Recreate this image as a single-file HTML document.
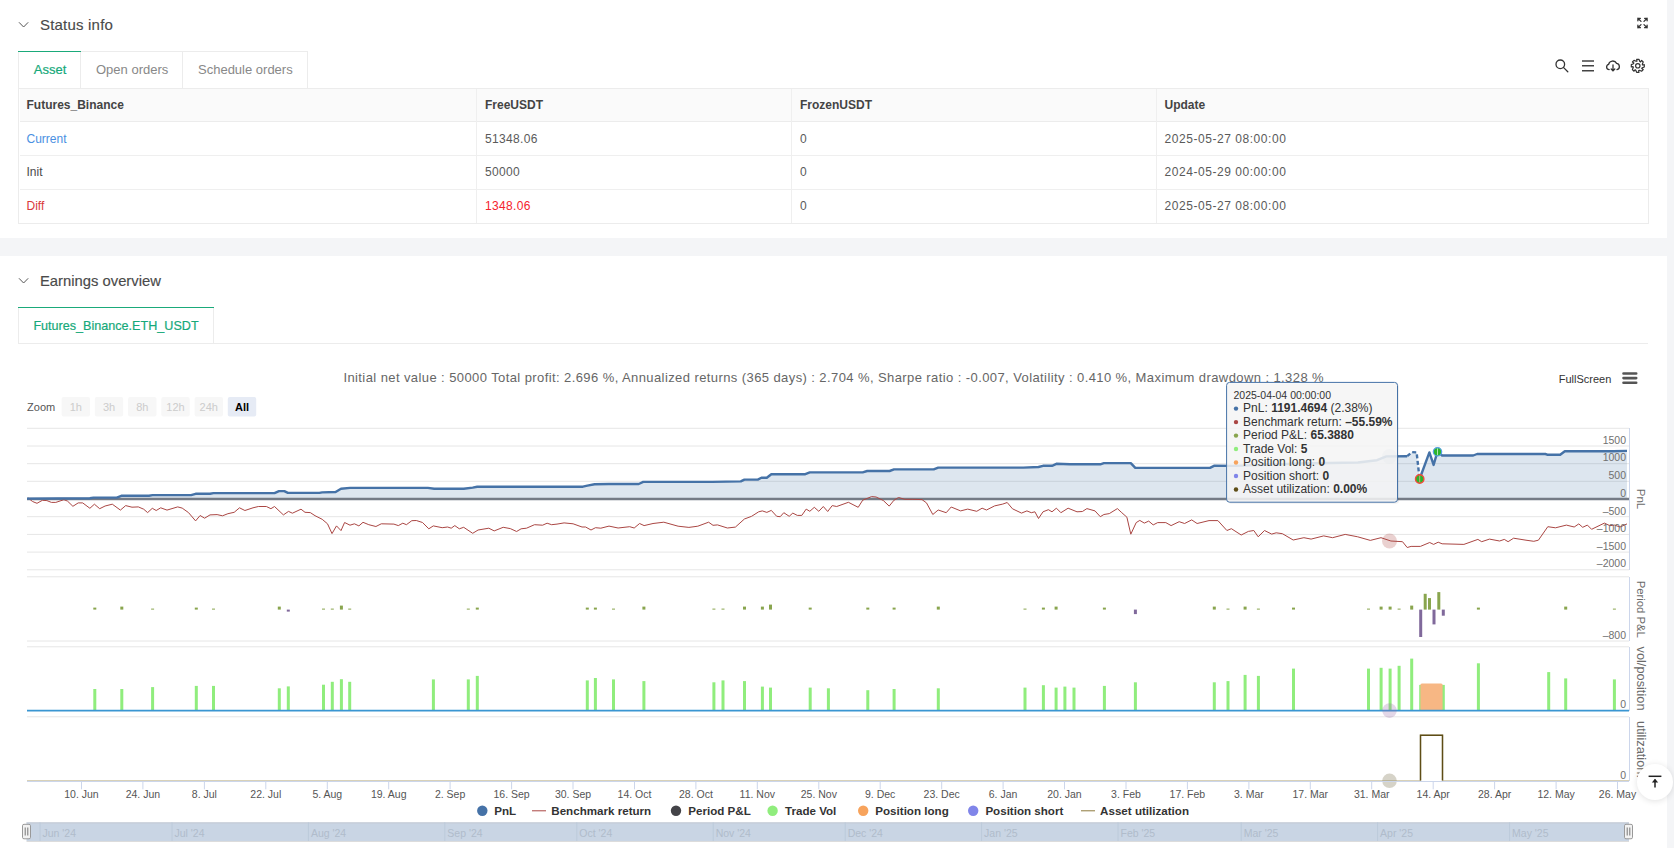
<!DOCTYPE html>
<html><head><meta charset="utf-8"><title>Status</title>
<style>
*{box-sizing:border-box;margin:0;padding:0}
html,body{width:1674px;height:848px;overflow:hidden;background:#f4f5f7;font-family:"Liberation Sans",sans-serif;}
.abs{position:absolute}
.card{position:absolute;left:0;width:1667px;background:#fff}
.t{position:absolute;white-space:nowrap;line-height:1}
</style></head><body>

<div class="card" style="top:0;height:238px"></div>
<div class="card" style="top:256px;height:600px"></div>
<svg class="abs" style="left:0;top:0" width="1674" height="848" viewBox="0 0 1674 848">
<path d="M19 22.3 L23.6 27 L28.2 22.3" fill="none" stroke="#555" stroke-width="1"/>
<path d="M19 278.3 L23.6 283 L28.2 278.3" fill="none" stroke="#555" stroke-width="1"/>
<g stroke="#333" stroke-width="1.3" fill="none" stroke-linecap="round" stroke-linejoin="round"><path d="M1641 21.4 L1637.9 18.3 M1637.9 20.8 V18.3 H1640.4"/><path d="M1644 21.4 L1647.1 18.3 M1647.1 20.8 V18.3 H1644.6"/><path d="M1641 24.6 L1637.9 27.7 M1637.9 25.2 V27.7 H1640.4"/><path d="M1644 24.6 L1647.1 27.7 M1647.1 25.2 V27.7 H1644.6"/></g>
<g stroke="#333" stroke-width="1.3" fill="none"><circle cx="1560.3" cy="64.3" r="4.3"/><path d="M1563.4 67.4 L1567.8 71.8" stroke-linecap="round"/></g>
<g stroke="#444" stroke-width="1.4"><path d="M1582 61 H1594 M1582 65.8 H1594 M1582 70.8 H1594"/></g>
<g stroke="#333" stroke-width="1.3" fill="none" stroke-linecap="round"><path d="M1609.2 69.6 C1606.2 69.6 1605.6 65.4 1608.6 64.4 C1609.4 60.4 1614.8 59.8 1616.6 63.4 C1619.8 63.6 1620.6 68.8 1617 69.6"/><path d="M1613 64.8 V70.6 M1611.2 69 L1613 70.8 L1614.8 69"/></g>
<path d="M1644.30 64.65 L1644.30 66.95 L1642.15 67.83 L1641.73 68.55 L1643.21 69.59 L1641.59 71.21 L1639.44 70.31 L1638.63 70.53 L1638.95 72.30 L1636.65 72.30 L1635.77 70.15 L1635.05 69.73 L1634.01 71.21 L1632.39 69.59 L1633.29 67.44 L1633.07 66.63 L1631.30 66.95 L1631.30 64.65 L1633.45 63.77 L1633.87 63.05 L1632.39 62.01 L1634.01 60.39 L1636.16 61.29 L1636.97 61.07 L1636.65 59.30 L1638.95 59.30 L1639.83 61.45 L1640.55 61.87 L1641.59 60.39 L1643.21 62.01 L1642.31 64.16 L1642.53 64.97 Z" fill="none" stroke="#333" stroke-width="1.2" stroke-linejoin="round"/>
<circle cx="1637.8" cy="65.8" r="2.2" fill="none" stroke="#333" stroke-width="1.2"/>
</svg>
<div class="t" style="left:40px;top:17.2px;font-size:15px;color:#4a4a4a;letter-spacing:0.2px;-webkit-text-stroke:0.15px #4a4a4a">Status info</div>
<div class="abs" style="left:18px;top:51px;width:290px;height:37px;border:1px solid #ececec;border-bottom:none"></div>
<div class="abs" style="left:18px;top:51px;width:63px;height:1.2px;background:#1aaa7a"></div>
<div class="abs" style="left:80px;top:52px;width:1px;height:36px;background:#ececec"></div>
<div class="abs" style="left:182px;top:52px;width:1px;height:36px;background:#ececec"></div>
<div class="t" style="left:33.8px;top:63px;font-size:13px;color:#16a97a;-webkit-text-stroke:0.2px #16a97a">Asset</div>
<div class="t" style="left:96px;top:63px;font-size:13px;color:#888">Open orders</div>
<div class="t" style="left:198px;top:63px;font-size:13px;color:#888">Schedule orders</div>
<div class="abs" style="left:18px;top:88px;width:1631px;height:135.5px;border:1px solid #ececec"></div>
<div class="abs" style="left:19.5px;top:89px;width:1628px;height:32.5px;background:#fafafa;border-bottom:1px solid #ececec"></div>
<div class="abs" style="left:19.5px;top:155px;width:1628px;height:1px;background:#efefef"></div>
<div class="abs" style="left:19.5px;top:189px;width:1628px;height:1px;background:#efefef"></div>
<div class="abs" style="left:476px;top:89px;width:1px;height:134px;background:#efefef"></div>
<div class="abs" style="left:791px;top:89px;width:1px;height:134px;background:#efefef"></div>
<div class="abs" style="left:1156px;top:89px;width:1px;height:134px;background:#efefef"></div>
<div class="t" style="left:26.5px;top:99px;font-size:12px;font-weight:bold;color:#444">Futures_Binance</div>
<div class="t" style="left:485px;top:99px;font-size:12px;font-weight:bold;color:#444">FreeUSDT</div>
<div class="t" style="left:800px;top:99px;font-size:12px;font-weight:bold;color:#444">FrozenUSDT</div>
<div class="t" style="left:1164.5px;top:99px;font-size:12px;font-weight:bold;color:#444">Update</div>
<div class="t" style="left:26.5px;top:133px;font-size:12px;color:#4a90e2;letter-spacing:0">Current</div>
<div class="t" style="left:485px;top:133px;font-size:12px;color:#5a5a5a;letter-spacing:0.35px">51348.06</div>
<div class="t" style="left:800px;top:133px;font-size:12px;color:#5a5a5a;letter-spacing:0.35px">0</div>
<div class="t" style="left:1164.5px;top:133px;font-size:12px;color:#5a5a5a;letter-spacing:0.55px">2025-05-27 08:00:00</div>
<div class="t" style="left:26.5px;top:165.9px;font-size:12px;color:#4a4a4a;letter-spacing:0">Init</div>
<div class="t" style="left:485px;top:165.9px;font-size:12px;color:#5a5a5a;letter-spacing:0.35px">50000</div>
<div class="t" style="left:800px;top:165.9px;font-size:12px;color:#5a5a5a;letter-spacing:0.35px">0</div>
<div class="t" style="left:1164.5px;top:165.9px;font-size:12px;color:#5a5a5a;letter-spacing:0.55px">2024-05-29 00:00:00</div>
<div class="t" style="left:26.5px;top:200px;font-size:12px;color:#d9383a;letter-spacing:0">Diff</div>
<div class="t" style="left:485px;top:200px;font-size:12px;color:#f5222d;letter-spacing:0.35px">1348.06</div>
<div class="t" style="left:800px;top:200px;font-size:12px;color:#5a5a5a;letter-spacing:0.35px">0</div>
<div class="t" style="left:1164.5px;top:200px;font-size:12px;color:#5a5a5a;letter-spacing:0.55px">2025-05-27 08:00:00</div>
<div class="t" style="left:40px;top:274px;font-size:14.8px;color:#4a4a4a;-webkit-text-stroke:0.15px #4a4a4a">Earnings overview</div>
<div class="abs" style="left:18px;top:307px;width:196px;height:37px;border:1px solid #ececec;border-bottom:none"></div>
<div class="abs" style="left:18px;top:307px;width:196px;height:1.2px;background:#1aaa7a"></div>
<div class="abs" style="left:18px;top:343px;width:1630px;height:1px;background:#ececec"></div>
<div class="t" style="left:33.4px;top:320px;font-size:12.6px;color:#16a97a;-webkit-text-stroke:0.2px #16a97a">Futures_Binance.ETH_USDT</div>
<svg class="abs" style="left:0;top:0" width="1674" height="848" viewBox="0 0 1674 848" font-family='"Liberation Sans", sans-serif'>
<text x="343.4" y="381.7" font-size="13" fill="#666" letter-spacing="0.41">Initial net value : 50000 Total profit: 2.696 %, Annualized returns (365 days) : 2.704 %, Sharpe ratio : -0.007, Volatility : 0.410 %, Maximum drawdown : 1.328 %</text>
<text x="1558.7" y="382.9" font-size="11" fill="#333">FullScreen</text>
<g stroke="#555" stroke-width="2.6" stroke-linecap="round"><path d="M1623.5 373.5 H1636.2 M1623.5 378.1 H1636.2 M1623.5 382.7 H1636.2"/></g>
<text x="27.1" y="411" font-size="11" fill="#555">Zoom</text>
<rect x="61.6" y="397" width="28.4" height="19.4" rx="2" fill="#f7f7f7"/>
<text x="75.8" y="411" font-size="11" fill="#cccccc" text-anchor="middle">1h</text>
<rect x="94.8" y="397" width="28.4" height="19.4" rx="2" fill="#f7f7f7"/>
<text x="109.0" y="411" font-size="11" fill="#cccccc" text-anchor="middle">3h</text>
<rect x="128.1" y="397" width="28.4" height="19.4" rx="2" fill="#f7f7f7"/>
<text x="142.3" y="411" font-size="11" fill="#cccccc" text-anchor="middle">8h</text>
<rect x="161.3" y="397" width="28.4" height="19.4" rx="2" fill="#f7f7f7"/>
<text x="175.5" y="411" font-size="11" fill="#cccccc" text-anchor="middle">12h</text>
<rect x="194.6" y="397" width="28.4" height="19.4" rx="2" fill="#f7f7f7"/>
<text x="208.8" y="411" font-size="11" fill="#cccccc" text-anchor="middle">24h</text>
<rect x="227.8" y="397" width="28.4" height="19.4" rx="2" fill="#e6ebf5"/>
<text x="242.0" y="411" font-size="11" fill="#000" text-anchor="middle" font-weight="bold">All</text>
<line x1="27" y1="428.3" x2="1629" y2="428.3" stroke="#e6e6e6" stroke-width="1"/>
<line x1="27" y1="446" x2="1629" y2="446" stroke="#e6e6e6" stroke-width="1"/>
<line x1="27" y1="463.7" x2="1629" y2="463.7" stroke="#e6e6e6" stroke-width="1"/>
<line x1="27" y1="481.3" x2="1629" y2="481.3" stroke="#e6e6e6" stroke-width="1"/>
<line x1="27" y1="516.7" x2="1629" y2="516.7" stroke="#e6e6e6" stroke-width="1"/>
<line x1="27" y1="534.4" x2="1629" y2="534.4" stroke="#e6e6e6" stroke-width="1"/>
<line x1="27" y1="552.1" x2="1629" y2="552.1" stroke="#e6e6e6" stroke-width="1"/>
<line x1="27" y1="569.8" x2="1629" y2="569.8" stroke="#e6e6e6" stroke-width="1"/>
<line x1="27" y1="576.8" x2="1629" y2="576.8" stroke="#e6e6e6" stroke-width="1"/>
<line x1="27" y1="641" x2="1629" y2="641" stroke="#e6e6e6" stroke-width="1"/>
<line x1="27" y1="646.8" x2="1629" y2="646.8" stroke="#e6e6e6" stroke-width="1"/>
<line x1="27" y1="716.8" x2="1629" y2="716.8" stroke="#e6e6e6" stroke-width="1"/>
<line x1="1629.5" y1="428" x2="1629.5" y2="570" stroke="#ccd6eb" stroke-width="1"/>
<line x1="1629.5" y1="577" x2="1629.5" y2="641" stroke="#ccd6eb" stroke-width="1"/>
<line x1="1629.5" y1="647" x2="1629.5" y2="711" stroke="#ccd6eb" stroke-width="1"/>
<line x1="1629.5" y1="717" x2="1629.5" y2="781" stroke="#ccd6eb" stroke-width="1"/>
<path d="M27,499 L27.0,498.6 L89.9,498.3 L93.5,497.6 L116.8,497.6 L121.3,495.8 L149.0,495.8 L152.6,495.1 L191.1,495.1 L195.6,493.8 L210.0,493.8 L213.5,493.1 L274.5,493.1 L279.0,491.1 L284.3,491.1 L287.9,492.9 L319.3,492.9 L322.2,492.4 L335.6,492.0 L341.0,488.8 L350.0,487.9 L427.9,487.9 L434.2,488.8 L463.7,488.8 L472.7,487.6 L477.2,486.7 L582.9,486.7 L587.4,485.6 L594.6,484.3 L608.9,484.0 L638.7,484.0 L643.2,481.9 L712.2,481.9 L740.8,481.4 L744.4,479.6 L757.8,479.6 L761.4,477.8 L766.8,477.8 L771.3,474.2 L805.3,474.2 L809.8,472.4 L862.7,472.4 L867.2,471.0 L889.6,471.0 L894.0,469.4 L933.7,469.4 L938.2,467.6 L1023.3,467.6 L1038.5,467.0 L1043.0,465.8 L1052.0,465.8 L1056.4,463.8 L1069.9,464.3 L1100.3,464.3 L1103.9,463.1 L1130.8,463.1 L1135.3,467.9 L1210.0,467.9 L1214.5,465.7 L1235.5,465.9 L1300.0,463.5 L1358.0,462.5 L1377.0,460.2 L1386.4,456.4 L1407.2,456.2 L1412.0,452.1 L1416.6,452.4 L1419.6,479.0 L1429.4,452.4 L1433.6,464.9 L1437.5,451.6 L1442.1,455.5 L1473.2,455.5 L1477.1,454.0 L1545.4,454.0 L1547.8,454.8 L1560.2,454.8 L1564.8,451.2 L1613.0,451.2 L1627.0,450.9 L1627,499 Z" fill="#4572A7" fill-opacity="0.18"/>
<line x1="27" y1="499" x2="1629" y2="499" stroke="#747b86" stroke-width="2.4"/>
<polyline points="28.1,497.9 32.5,501.5 37.0,503.3 42.4,500.3 46.9,500.6 51.4,502.4 55.8,502.4 63.9,499.7 67.5,501.1 72.9,506.3 78.2,502.9 82.7,502.9 89.9,508.3 94.4,504.2 99.7,508.7 105.1,506.0 112.3,504.2 120.4,510.1 125.7,505.6 132.0,507.2 138.3,506.9 143.7,509.2 147.6,512.6 152.3,508.3 156.2,510.5 160.7,507.8 167.0,510.1 177.7,506.9 182.2,508.1 188.5,512.6 195.6,520.9 200.1,515.5 204.6,518.2 210.0,514.9 217.1,514.6 222.5,515.8 227.9,513.7 234.2,512.3 239.5,507.8 244.9,510.5 253.0,507.8 258.4,506.5 266.4,506.5 270.9,508.7 274.5,506.5 283.4,514.9 288.5,511.4 292.4,513.2 301.0,509.2 305.0,512.3 310.3,512.6 315.0,515.7 322.2,519.3 327.5,523.8 332.0,533.6 336.5,525.9 341.0,530.6 344.6,522.5 350.0,525.2 354.4,523.8 358.9,525.9 363.0,522.3 368.8,524.7 375.9,526.5 381.3,523.8 393.9,524.1 398.3,525.6 402.8,523.2 406.4,524.7 411.8,520.7 416.3,520.5 422.5,522.5 428.8,528.8 433.3,525.9 442.2,527.7 447.6,527.0 451.2,528.2 454.8,525.6 459.3,528.8 463.7,527.3 472.7,533.3 478.1,530.0 488.8,528.2 494.2,530.9 503.2,527.3 510.3,528.6 516.6,531.5 521.1,528.8 526.5,528.2 534.5,524.7 542.6,525.2 547.1,523.2 551.6,524.7 557.0,524.1 564.1,522.9 573.1,523.8 582.0,527.0 585.6,527.0 591.0,530.0 595.5,527.7 600.8,528.2 609.0,526.1 618.1,528.0 629.7,526.7 634.2,528.0 639.6,523.5 644.1,525.6 653.0,523.5 663.8,522.2 678.1,526.2 688.9,527.4 697.8,526.2 708.6,522.2 713.0,525.3 717.5,524.9 727.4,528.0 735.4,527.1 744.4,519.0 751.6,516.3 758.7,511.8 762.3,510.9 766.8,512.4 771.3,510.4 776.7,516.3 780.2,516.7 783.8,512.7 789.2,516.3 792.8,513.1 797.3,515.4 801.8,515.4 806.2,509.1 809.8,511.3 814.3,507.3 818.8,511.3 823.3,506.5 827.7,511.5 832.2,505.6 836.7,506.5 848.4,502.3 858.2,507.3 862.7,500.2 871.6,496.6 876.1,497.0 883.3,500.5 889.2,506.1 894.0,500.2 898.5,497.5 904.8,499.3 912.2,499.3 922.0,499.6 926.5,502.9 932.8,514.5 938.2,510.0 946.2,512.7 951.2,507.0 960.6,510.9 967.7,509.1 976.7,511.3 982.1,508.2 986.5,510.0 994.6,505.9 1002.7,504.1 1007.2,502.5 1012.5,508.8 1021.5,513.1 1026.9,510.9 1031.3,512.7 1034.9,511.8 1038.5,518.5 1043.0,511.8 1048.4,509.7 1052.0,511.8 1056.4,508.2 1060.9,512.7 1068.1,508.2 1077.0,511.8 1082.4,511.5 1086.9,508.6 1095.0,510.9 1100.3,516.7 1103.9,514.5 1109.3,513.6 1117.4,508.6 1121.8,512.7 1126.9,517.2 1130.8,534.2 1136.2,522.6 1139.8,520.4 1144.3,523.1 1148.7,521.1 1153.2,524.9 1157.7,522.6 1165.8,522.6 1171.1,525.6 1179.2,521.7 1184.6,523.5 1191.7,519.9 1197.1,523.5 1209.0,520.6 1217.9,520.6 1226.9,530.5 1231.4,528.7 1241.2,535.0 1248.4,531.4 1253.8,530.5 1258.2,536.8 1264.5,530.5 1271.7,534.1 1276.2,532.8 1282.4,533.7 1293.2,540.0 1303.9,537.7 1311.1,539.1 1323.7,535.9 1332.6,537.7 1345.2,534.4 1357.7,536.8 1370.3,540.4 1381.0,537.7 1390.9,541.0 1402.5,541.7 1407.2,547.5 1411.1,546.4 1420.4,546.4 1429.7,542.5 1433.6,544.4 1438.2,542.2 1442.1,543.8 1463.9,544.4 1477.9,539.4 1481.7,541.7 1489.5,539.1 1499.6,541.0 1504.3,539.4 1508.1,541.7 1513.6,538.2 1526.0,540.2 1533.8,541.3 1538.4,540.2 1547.8,526.7 1555.5,527.8 1566.4,525.1 1574.2,527.0 1578.8,523.9 1582.7,527.3 1587.4,525.1 1591.6,529.3 1604.4,523.1 1609.9,525.7 1614.5,525.1 1620.0,527.0 1627.0,523.9" fill="none" stroke="#AA4643" stroke-width="1" stroke-linejoin="round"/>
<polyline points="27.0,498.6 89.9,498.3 93.5,497.6 116.8,497.6 121.3,495.8 149.0,495.8 152.6,495.1 191.1,495.1 195.6,493.8 210.0,493.8 213.5,493.1 274.5,493.1 279.0,491.1 284.3,491.1 287.9,492.9 319.3,492.9 322.2,492.4 335.6,492.0 341.0,488.8 350.0,487.9 427.9,487.9 434.2,488.8 463.7,488.8 472.7,487.6 477.2,486.7 582.9,486.7 587.4,485.6 594.6,484.3 608.9,484.0 638.7,484.0 643.2,481.9 712.2,481.9 740.8,481.4 744.4,479.6 757.8,479.6 761.4,477.8 766.8,477.8 771.3,474.2 805.3,474.2 809.8,472.4 862.7,472.4 867.2,471.0 889.6,471.0 894.0,469.4 933.7,469.4 938.2,467.6 1023.3,467.6 1038.5,467.0 1043.0,465.8 1052.0,465.8 1056.4,463.8 1069.9,464.3 1100.3,464.3 1103.9,463.1 1130.8,463.1 1135.3,467.9 1210.0,467.9 1214.5,465.7 1235.5,465.9 1300.0,463.5 1358.0,462.5 1377.0,460.2 1386.4,456.4 1407.2,456.2" fill="none" stroke="#4572A7" stroke-width="2.4" stroke-linejoin="round"/>
<polyline points="1407.2,456.2 1412.0,452.1 1416.6,452.4 1419.6,479.0" fill="none" stroke="#4572A7" stroke-width="2.4" stroke-dasharray="4,2.5"/>
<polyline points="1419.6,479.0 1429.4,452.4 1433.6,464.9 1437.5,451.6 1442.1,455.5 1473.2,455.5 1477.1,454.0 1545.4,454.0 1547.8,454.8 1560.2,454.8 1564.8,451.2 1613.0,451.2 1627.0,450.9" fill="none" stroke="#4572A7" stroke-width="2.4" stroke-linejoin="round"/>
<circle cx="1419.7" cy="479" r="4.2" fill="#2bb52b" stroke="#f24a3a" stroke-width="1.4"/>
<line x1="1419.7" y1="475.6" x2="1419.7" y2="482.4" stroke="#f0a090" stroke-width="0.8"/>
<circle cx="1437.5" cy="451.8" r="4.2" fill="#2bb52b" stroke="#57a0e6" stroke-width="1.2"/>
<line x1="1437.5" y1="448.4" x2="1437.5" y2="455.2" stroke="#d0f0d0" stroke-width="0.8"/>
<circle cx="1389.5" cy="541" r="7.5" fill="#AA4643" fill-opacity="0.25"/>
<circle cx="1389.5" cy="456.5" r="7.5" fill="#4572A7" fill-opacity="0.2"/>
<text x="1626" y="443.6" font-size="10.5" fill="#707070" text-anchor="end">1500</text>
<text x="1626" y="461.3" font-size="10.5" fill="#707070" text-anchor="end">1000</text>
<text x="1626" y="479" font-size="10.5" fill="#707070" text-anchor="end">500</text>
<text x="1626" y="497.2" font-size="10.5" fill="#707070" text-anchor="end">0</text>
<text x="1626" y="514.5" font-size="10.5" fill="#707070" text-anchor="end">&#8211;500</text>
<text x="1626" y="532.3" font-size="10.5" fill="#707070" text-anchor="end">&#8211;1000</text>
<text x="1626" y="549.6" font-size="10.5" fill="#707070" text-anchor="end">&#8211;1500</text>
<text x="1626" y="567.3" font-size="10.5" fill="#707070" text-anchor="end">&#8211;2000</text>
<text x="1626" y="638.6" font-size="10.5" fill="#707070" text-anchor="end">&#8211;800</text>
<text x="1626" y="708" font-size="10.5" fill="#707070" text-anchor="end">0</text>
<text x="1626" y="778.6" font-size="10.5" fill="#707070" text-anchor="end">0</text>
<text x="0" y="0" font-size="11.5" fill="#6a6a6a" text-anchor="middle" transform="translate(1636.5 499) rotate(90)">PnL</text>
<text x="0" y="0" font-size="11.3" fill="#6a6a6a" text-anchor="middle" transform="translate(1636.5 609.3) rotate(90)">Period P&amp;L</text>
<text x="0" y="0" font-size="12.8" fill="#6a6a6a" text-anchor="middle" transform="translate(1636.5 678.5) rotate(90)">vol/position</text>
<text x="0" y="0" font-size="12.8" fill="#6a6a6a" text-anchor="middle" transform="translate(1636.5 749.5) rotate(90)">utilization.</text>
<rect x="93.3" y="607.6" width="3" height="2" fill="#89A54E"/>
<rect x="120.3" y="606.6" width="3" height="3" fill="#89A54E"/>
<rect x="151.1" y="608.6" width="3" height="1" fill="#89A54E"/>
<rect x="194.8" y="607.6" width="3" height="2" fill="#89A54E"/>
<rect x="212.0" y="608.6" width="3" height="1" fill="#89A54E"/>
<rect x="277.8" y="606.6" width="3" height="3" fill="#89A54E"/>
<rect x="286.8" y="609.6" width="3" height="2" fill="#80699B"/>
<rect x="322.0" y="608.6" width="3" height="1" fill="#89A54E"/>
<rect x="330.8" y="608.6" width="3" height="1" fill="#89A54E"/>
<rect x="339.9" y="605.6" width="3" height="4" fill="#89A54E"/>
<rect x="348.2" y="608.6" width="3" height="1" fill="#89A54E"/>
<rect x="466.8" y="608.6" width="3" height="1" fill="#89A54E"/>
<rect x="475.8" y="607.6" width="3" height="2" fill="#89A54E"/>
<rect x="585.8" y="607.6" width="3" height="2" fill="#89A54E"/>
<rect x="593.9" y="607.6" width="3" height="2" fill="#89A54E"/>
<rect x="612.0" y="608.6" width="3" height="1" fill="#89A54E"/>
<rect x="642.4" y="606.6" width="3" height="3" fill="#89A54E"/>
<rect x="712.4" y="608.6" width="3" height="1" fill="#89A54E"/>
<rect x="721.5" y="608.6" width="3" height="1" fill="#89A54E"/>
<rect x="743.0" y="606.6" width="3" height="3" fill="#89A54E"/>
<rect x="760.9" y="606.6" width="3" height="3" fill="#89A54E"/>
<rect x="769.0" y="604.6" width="3" height="5" fill="#89A54E"/>
<rect x="808.7" y="607.6" width="3" height="2" fill="#89A54E"/>
<rect x="866.3" y="607.6" width="3" height="2" fill="#89A54E"/>
<rect x="892.6" y="607.6" width="3" height="2" fill="#89A54E"/>
<rect x="936.8" y="606.6" width="3" height="3" fill="#89A54E"/>
<rect x="1023.5" y="608.6" width="3" height="1" fill="#89A54E"/>
<rect x="1041.9" y="607.6" width="3" height="2" fill="#89A54E"/>
<rect x="1054.6" y="606.6" width="3" height="3" fill="#89A54E"/>
<rect x="1102.9" y="607.6" width="3" height="2" fill="#89A54E"/>
<rect x="1133.9" y="609.6" width="3" height="4.5" fill="#80699B"/>
<rect x="1212.8" y="606.6" width="3" height="3" fill="#89A54E"/>
<rect x="1226.5" y="608.6" width="3" height="1" fill="#89A54E"/>
<rect x="1243.6" y="606.6" width="3" height="3" fill="#89A54E"/>
<rect x="1256.9" y="608.6" width="3" height="1" fill="#89A54E"/>
<rect x="1292.0" y="607.6" width="3" height="2" fill="#89A54E"/>
<rect x="1367.0" y="608.6" width="3" height="1" fill="#89A54E"/>
<rect x="1379.6" y="606.6" width="3" height="3" fill="#89A54E"/>
<rect x="1388.6" y="606.6" width="3" height="3" fill="#89A54E"/>
<rect x="1397.6" y="608.6" width="3" height="1" fill="#89A54E"/>
<rect x="1410.2" y="605.6" width="3" height="4" fill="#89A54E"/>
<rect x="1419.2" y="609.6" width="3" height="27.4" fill="#80699B"/>
<rect x="1423.7" y="593.8" width="3" height="15.8" fill="#89A54E"/>
<rect x="1428.0" y="598.1" width="3" height="11.5" fill="#89A54E"/>
<rect x="1432.5" y="609.6" width="3" height="14.8" fill="#80699B"/>
<rect x="1437.3" y="592.1" width="3" height="17.5" fill="#89A54E"/>
<rect x="1441.8" y="609.6" width="3" height="6.1" fill="#80699B"/>
<rect x="1476.9" y="607.6" width="3" height="2" fill="#89A54E"/>
<rect x="1564.2" y="606.6" width="3" height="3" fill="#89A54E"/>
<rect x="1612.9" y="608.6" width="3" height="1" fill="#89A54E"/>
<rect x="93.3" y="689.0" width="3" height="21.6" fill="#90ed7d"/>
<rect x="120.3" y="689.0" width="3" height="21.6" fill="#90ed7d"/>
<rect x="151.1" y="687.1" width="3" height="23.5" fill="#90ed7d"/>
<rect x="194.8" y="685.9" width="3" height="24.7" fill="#90ed7d"/>
<rect x="212.0" y="685.9" width="3" height="24.7" fill="#90ed7d"/>
<rect x="277.8" y="688.3" width="3" height="22.3" fill="#90ed7d"/>
<rect x="286.8" y="686.4" width="3" height="24.2" fill="#90ed7d"/>
<rect x="322.0" y="684.7" width="3" height="25.9" fill="#90ed7d"/>
<rect x="330.8" y="681.8" width="3" height="28.8" fill="#90ed7d"/>
<rect x="339.9" y="679.2" width="3" height="31.4" fill="#90ed7d"/>
<rect x="348.2" y="681.8" width="3" height="28.8" fill="#90ed7d"/>
<rect x="431.9" y="679.4" width="3" height="31.2" fill="#90ed7d"/>
<rect x="466.8" y="679.4" width="3" height="31.2" fill="#90ed7d"/>
<rect x="475.8" y="675.9" width="3" height="34.7" fill="#90ed7d"/>
<rect x="585.8" y="680.4" width="3" height="30.2" fill="#90ed7d"/>
<rect x="593.9" y="678.0" width="3" height="32.6" fill="#90ed7d"/>
<rect x="612.0" y="679.4" width="3" height="31.2" fill="#90ed7d"/>
<rect x="642.4" y="681.1" width="3" height="29.5" fill="#90ed7d"/>
<rect x="712.4" y="682.3" width="3" height="28.3" fill="#90ed7d"/>
<rect x="721.5" y="680.4" width="3" height="30.2" fill="#90ed7d"/>
<rect x="743.0" y="681.1" width="3" height="29.5" fill="#90ed7d"/>
<rect x="760.9" y="686.6" width="3" height="24.0" fill="#90ed7d"/>
<rect x="769.0" y="687.6" width="3" height="23.0" fill="#90ed7d"/>
<rect x="808.7" y="687.6" width="3" height="23.0" fill="#90ed7d"/>
<rect x="826.9" y="688.3" width="3" height="22.3" fill="#90ed7d"/>
<rect x="866.3" y="690.2" width="3" height="20.4" fill="#90ed7d"/>
<rect x="892.6" y="689.0" width="3" height="21.6" fill="#90ed7d"/>
<rect x="936.8" y="688.3" width="3" height="22.3" fill="#90ed7d"/>
<rect x="1023.5" y="687.6" width="3" height="23.0" fill="#90ed7d"/>
<rect x="1041.9" y="685.2" width="3" height="25.4" fill="#90ed7d"/>
<rect x="1054.6" y="687.6" width="3" height="23.0" fill="#90ed7d"/>
<rect x="1063.4" y="686.6" width="3" height="24.0" fill="#90ed7d"/>
<rect x="1072.5" y="687.6" width="3" height="23.0" fill="#90ed7d"/>
<rect x="1102.9" y="685.9" width="3" height="24.7" fill="#90ed7d"/>
<rect x="1133.9" y="682.3" width="3" height="28.3" fill="#90ed7d"/>
<rect x="1212.8" y="682.3" width="3" height="28.3" fill="#90ed7d"/>
<rect x="1226.5" y="681.1" width="3" height="29.5" fill="#90ed7d"/>
<rect x="1243.6" y="674.9" width="3" height="35.7" fill="#90ed7d"/>
<rect x="1256.9" y="675.9" width="3" height="34.7" fill="#90ed7d"/>
<rect x="1292.0" y="668.6" width="3" height="42.0" fill="#90ed7d"/>
<rect x="1367.0" y="668.6" width="3" height="42.0" fill="#90ed7d"/>
<rect x="1379.6" y="667.8" width="3" height="42.8" fill="#90ed7d"/>
<rect x="1388.6" y="668.6" width="3" height="42.0" fill="#90ed7d"/>
<rect x="1397.6" y="665.8" width="3" height="44.8" fill="#90ed7d"/>
<rect x="1410.2" y="658.6" width="3" height="52.0" fill="#90ed7d"/>
<rect x="1419.2" y="684.9" width="3" height="25.7" fill="#90ed7d"/>
<rect x="1441.8" y="684.9" width="3" height="25.7" fill="#90ed7d"/>
<rect x="1476.9" y="663.3" width="3" height="47.3" fill="#90ed7d"/>
<rect x="1547.2" y="672.1" width="3" height="38.5" fill="#90ed7d"/>
<rect x="1564.2" y="678.4" width="3" height="32.2" fill="#90ed7d"/>
<rect x="1612.9" y="679.4" width="3" height="31.2" fill="#90ed7d"/>
<rect x="1420.4" y="683.4" width="22.2" height="27.2" rx="1.5" fill="#f7b784"/>
<line x1="27" y1="710.6" x2="1629" y2="710.6" stroke="#3a96d2" stroke-width="1.6"/>
<circle cx="1389.5" cy="710.6" r="7.3" fill="#9a6fa8" fill-opacity="0.28"/>
<path d="M27 780.6 H1420.5 V735.2 H1442.5 V780.6 H1629" fill="none" stroke="#d8d1b8" stroke-width="1.2"/>
<path d="M1420.5 780.6 V735.2 H1442.5 V780.6" fill="none" stroke="#5e4d16" stroke-width="1.5"/>
<circle cx="1389.5" cy="780.8" r="7.3" fill="#8a8160" fill-opacity="0.35"/>
<line x1="27" y1="781.5" x2="1629" y2="781.5" stroke="#ccd6eb" stroke-width="1"/>
<line x1="81.5" y1="781.5" x2="81.5" y2="789.3" stroke="#ccd6eb" stroke-width="1"/>
<text x="81.5" y="798" font-size="10.5" fill="#555" text-anchor="middle">10. Jun</text>
<line x1="142.9" y1="781.5" x2="142.9" y2="789.3" stroke="#ccd6eb" stroke-width="1"/>
<text x="142.9" y="798" font-size="10.5" fill="#555" text-anchor="middle">24. Jun</text>
<line x1="204.4" y1="781.5" x2="204.4" y2="789.3" stroke="#ccd6eb" stroke-width="1"/>
<text x="204.4" y="798" font-size="10.5" fill="#555" text-anchor="middle">8. Jul</text>
<line x1="265.8" y1="781.5" x2="265.8" y2="789.3" stroke="#ccd6eb" stroke-width="1"/>
<text x="265.8" y="798" font-size="10.5" fill="#555" text-anchor="middle">22. Jul</text>
<line x1="327.3" y1="781.5" x2="327.3" y2="789.3" stroke="#ccd6eb" stroke-width="1"/>
<text x="327.3" y="798" font-size="10.5" fill="#555" text-anchor="middle">5. Aug</text>
<line x1="388.7" y1="781.5" x2="388.7" y2="789.3" stroke="#ccd6eb" stroke-width="1"/>
<text x="388.7" y="798" font-size="10.5" fill="#555" text-anchor="middle">19. Aug</text>
<line x1="450.1" y1="781.5" x2="450.1" y2="789.3" stroke="#ccd6eb" stroke-width="1"/>
<text x="450.1" y="798" font-size="10.5" fill="#555" text-anchor="middle">2. Sep</text>
<line x1="511.6" y1="781.5" x2="511.6" y2="789.3" stroke="#ccd6eb" stroke-width="1"/>
<text x="511.6" y="798" font-size="10.5" fill="#555" text-anchor="middle">16. Sep</text>
<line x1="573.0" y1="781.5" x2="573.0" y2="789.3" stroke="#ccd6eb" stroke-width="1"/>
<text x="573.0" y="798" font-size="10.5" fill="#555" text-anchor="middle">30. Sep</text>
<line x1="634.5" y1="781.5" x2="634.5" y2="789.3" stroke="#ccd6eb" stroke-width="1"/>
<text x="634.5" y="798" font-size="10.5" fill="#555" text-anchor="middle">14. Oct</text>
<line x1="695.9" y1="781.5" x2="695.9" y2="789.3" stroke="#ccd6eb" stroke-width="1"/>
<text x="695.9" y="798" font-size="10.5" fill="#555" text-anchor="middle">28. Oct</text>
<line x1="757.3" y1="781.5" x2="757.3" y2="789.3" stroke="#ccd6eb" stroke-width="1"/>
<text x="757.3" y="798" font-size="10.5" fill="#555" text-anchor="middle">11. Nov</text>
<line x1="818.8" y1="781.5" x2="818.8" y2="789.3" stroke="#ccd6eb" stroke-width="1"/>
<text x="818.8" y="798" font-size="10.5" fill="#555" text-anchor="middle">25. Nov</text>
<line x1="880.2" y1="781.5" x2="880.2" y2="789.3" stroke="#ccd6eb" stroke-width="1"/>
<text x="880.2" y="798" font-size="10.5" fill="#555" text-anchor="middle">9. Dec</text>
<line x1="941.7" y1="781.5" x2="941.7" y2="789.3" stroke="#ccd6eb" stroke-width="1"/>
<text x="941.7" y="798" font-size="10.5" fill="#555" text-anchor="middle">23. Dec</text>
<line x1="1003.1" y1="781.5" x2="1003.1" y2="789.3" stroke="#ccd6eb" stroke-width="1"/>
<text x="1003.1" y="798" font-size="10.5" fill="#555" text-anchor="middle">6. Jan</text>
<line x1="1064.5" y1="781.5" x2="1064.5" y2="789.3" stroke="#ccd6eb" stroke-width="1"/>
<text x="1064.5" y="798" font-size="10.5" fill="#555" text-anchor="middle">20. Jan</text>
<line x1="1126.0" y1="781.5" x2="1126.0" y2="789.3" stroke="#ccd6eb" stroke-width="1"/>
<text x="1126.0" y="798" font-size="10.5" fill="#555" text-anchor="middle">3. Feb</text>
<line x1="1187.4" y1="781.5" x2="1187.4" y2="789.3" stroke="#ccd6eb" stroke-width="1"/>
<text x="1187.4" y="798" font-size="10.5" fill="#555" text-anchor="middle">17. Feb</text>
<line x1="1248.9" y1="781.5" x2="1248.9" y2="789.3" stroke="#ccd6eb" stroke-width="1"/>
<text x="1248.9" y="798" font-size="10.5" fill="#555" text-anchor="middle">3. Mar</text>
<line x1="1310.3" y1="781.5" x2="1310.3" y2="789.3" stroke="#ccd6eb" stroke-width="1"/>
<text x="1310.3" y="798" font-size="10.5" fill="#555" text-anchor="middle">17. Mar</text>
<line x1="1371.7" y1="781.5" x2="1371.7" y2="789.3" stroke="#ccd6eb" stroke-width="1"/>
<text x="1371.7" y="798" font-size="10.5" fill="#555" text-anchor="middle">31. Mar</text>
<line x1="1433.2" y1="781.5" x2="1433.2" y2="789.3" stroke="#ccd6eb" stroke-width="1"/>
<text x="1433.2" y="798" font-size="10.5" fill="#555" text-anchor="middle">14. Apr</text>
<line x1="1494.6" y1="781.5" x2="1494.6" y2="789.3" stroke="#ccd6eb" stroke-width="1"/>
<text x="1494.6" y="798" font-size="10.5" fill="#555" text-anchor="middle">28. Apr</text>
<line x1="1556.1" y1="781.5" x2="1556.1" y2="789.3" stroke="#ccd6eb" stroke-width="1"/>
<text x="1556.1" y="798" font-size="10.5" fill="#555" text-anchor="middle">12. May</text>
<line x1="1617.5" y1="781.5" x2="1617.5" y2="789.3" stroke="#ccd6eb" stroke-width="1"/>
<text x="1617.5" y="798" font-size="10.5" fill="#555" text-anchor="middle">26. May</text>
<circle cx="482.3" cy="810.8" r="5.2" fill="#4572A7"/>
<text x="494.3" y="815" font-size="11.6" font-weight="bold" fill="#333">PnL</text>
<line x1="532" y1="810.8" x2="546" y2="810.8" stroke="#AA4643" stroke-width="1"/>
<text x="551.3" y="815" font-size="11.6" font-weight="bold" fill="#333">Benchmark return</text>
<circle cx="676" cy="810.8" r="5.2" fill="#434348"/>
<text x="688.3" y="815" font-size="11.6" font-weight="bold" fill="#333">Period P&amp;L</text>
<circle cx="772.6" cy="810.8" r="5.2" fill="#90ed7d"/>
<text x="785" y="815" font-size="11.6" font-weight="bold" fill="#333">Trade Vol</text>
<circle cx="863.2" cy="810.8" r="5.2" fill="#f7a35c"/>
<text x="875.3" y="815" font-size="11.6" font-weight="bold" fill="#333">Position long</text>
<circle cx="973.2" cy="810.8" r="5.2" fill="#8085e9"/>
<text x="985.4" y="815" font-size="11.6" font-weight="bold" fill="#333">Position short</text>
<line x1="1081" y1="810.8" x2="1095" y2="810.8" stroke="#8d7a3d" stroke-width="1"/>
<text x="1100.1" y="815" font-size="11.6" font-weight="bold" fill="#333">Asset utilization</text>
<rect x="26.5" y="822.4" width="1602.5" height="18.6" fill="#c9d5e4"/>
<line x1="26.5" y1="822.9" x2="1629" y2="822.9" stroke="#c5cad3" stroke-width="1"/>
<line x1="26.5" y1="841.5" x2="1629" y2="841.5" stroke="#dcdcdc" stroke-width="1"/>
<line x1="40.0" y1="822.4" x2="40.0" y2="841" stroke="#bccada" stroke-width="1"/>
<text x="42.5" y="836.8" font-size="10.5" fill="#b0bccb">Jun '24</text>
<line x1="172.0" y1="822.4" x2="172.0" y2="841" stroke="#bccada" stroke-width="1"/>
<text x="174.5" y="836.8" font-size="10.5" fill="#b0bccb">Jul '24</text>
<line x1="308.4" y1="822.4" x2="308.4" y2="841" stroke="#bccada" stroke-width="1"/>
<text x="310.9" y="836.8" font-size="10.5" fill="#b0bccb">Aug '24</text>
<line x1="444.8" y1="822.4" x2="444.8" y2="841" stroke="#bccada" stroke-width="1"/>
<text x="447.3" y="836.8" font-size="10.5" fill="#b0bccb">Sep '24</text>
<line x1="576.8" y1="822.4" x2="576.8" y2="841" stroke="#bccada" stroke-width="1"/>
<text x="579.3" y="836.8" font-size="10.5" fill="#b0bccb">Oct '24</text>
<line x1="713.2" y1="822.4" x2="713.2" y2="841" stroke="#bccada" stroke-width="1"/>
<text x="715.7" y="836.8" font-size="10.5" fill="#b0bccb">Nov '24</text>
<line x1="845.2" y1="822.4" x2="845.2" y2="841" stroke="#bccada" stroke-width="1"/>
<text x="847.7" y="836.8" font-size="10.5" fill="#b0bccb">Dec '24</text>
<line x1="981.6" y1="822.4" x2="981.6" y2="841" stroke="#bccada" stroke-width="1"/>
<text x="984.1" y="836.8" font-size="10.5" fill="#b0bccb">Jan '25</text>
<line x1="1118.0" y1="822.4" x2="1118.0" y2="841" stroke="#bccada" stroke-width="1"/>
<text x="1120.5" y="836.8" font-size="10.5" fill="#b0bccb">Feb '25</text>
<line x1="1241.2" y1="822.4" x2="1241.2" y2="841" stroke="#bccada" stroke-width="1"/>
<text x="1243.7" y="836.8" font-size="10.5" fill="#b0bccb">Mar '25</text>
<line x1="1377.6" y1="822.4" x2="1377.6" y2="841" stroke="#bccada" stroke-width="1"/>
<text x="1380.1" y="836.8" font-size="10.5" fill="#b0bccb">Apr '25</text>
<line x1="1509.6" y1="822.4" x2="1509.6" y2="841" stroke="#bccada" stroke-width="1"/>
<text x="1512.1" y="836.8" font-size="10.5" fill="#b0bccb">May '25</text>
<rect x="22.5" y="824.3" width="8" height="14.5" rx="1.5" fill="#f2f2f2" stroke="#999" stroke-width="1"/>
<line x1="25.2" y1="827.5" x2="25.2" y2="835.5" stroke="#777" stroke-width="1"/>
<line x1="27.8" y1="827.5" x2="27.8" y2="835.5" stroke="#777" stroke-width="1"/>
<rect x="1624.5" y="824.3" width="8" height="14.5" rx="1.5" fill="#f2f2f2" stroke="#999" stroke-width="1"/>
<line x1="1627.2" y1="827.5" x2="1627.2" y2="835.5" stroke="#777" stroke-width="1"/>
<line x1="1629.8" y1="827.5" x2="1629.8" y2="835.5" stroke="#777" stroke-width="1"/>
<rect x="1228.1" y="383.9" width="170.9" height="119.8" rx="3" fill="#000" fill-opacity="0.06"/>
<rect x="1226.6" y="382.4" width="170.9" height="119.8" rx="3" fill="#f7f7f7" fill-opacity="0.85" stroke="#4572A7" stroke-width="1"/>
<text x="1233.5" y="399" font-size="10.5" fill="#333">2025-04-04 00:00:00</text>
<circle cx="1236" cy="408.6" r="2.2" fill="#4572A7"/>
<text x="1243.1" y="412.2" font-size="12" fill="#333">PnL: <tspan font-weight="bold">1191.4694</tspan> (2.38%)</text>
<circle cx="1236" cy="422.1" r="2.2" fill="#AA4643"/>
<text x="1243.1" y="425.7" font-size="12" fill="#333">Benchmark return: <tspan font-weight="bold">&#8211;55.59%</tspan></text>
<circle cx="1236" cy="435.6" r="2.2" fill="#89A54E"/>
<text x="1243.1" y="439.2" font-size="12" fill="#333">Period P&amp;L: <tspan font-weight="bold">65.3880</tspan></text>
<circle cx="1236" cy="449.0" r="2.2" fill="#90ed7d"/>
<text x="1243.1" y="452.6" font-size="12" fill="#333">Trade Vol: <tspan font-weight="bold">5</tspan></text>
<circle cx="1236" cy="462.5" r="2.2" fill="#f7a35c"/>
<text x="1243.1" y="466.1" font-size="12" fill="#333">Position long: <tspan font-weight="bold">0</tspan></text>
<circle cx="1236" cy="476.0" r="2.2" fill="#8085e9"/>
<text x="1243.1" y="479.6" font-size="12" fill="#333">Position short: <tspan font-weight="bold">0</tspan></text>
<circle cx="1236" cy="489.5" r="2.2" fill="#5e4d16"/>
<text x="1243.1" y="493.1" font-size="12" fill="#333">Asset utilization: <tspan font-weight="bold">0.00%</tspan></text>
</svg>
<div class="abs" style="left:1636.6px;top:764px;width:36px;height:36px;border-radius:50%;background:#fff;box-shadow:0 1px 6px rgba(0,0,0,0.12)"></div>
<svg class="abs" style="left:0;top:0" width="1674" height="848"><g stroke="#222" stroke-width="1.5"><path d="M1648.6 776.3 H1661.4"/><path d="M1655 779.5 V787.5"/></g><path d="M1651.8 782.6 L1655 778.8 L1658.2 782.6 Z" fill="#222"/></svg>
</body></html>
